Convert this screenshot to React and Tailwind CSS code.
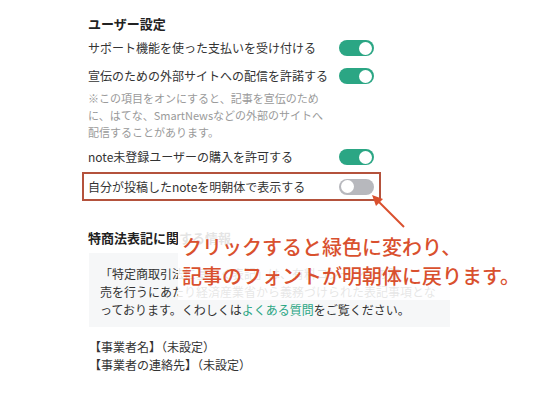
import React from "react";

const Toggle = ({ on }) => {
  return (
    <div
      className={
        "w-[35px] h-[16px] rounded-full flex items-center px-[2px] shrink-0 " +
        (on ? "bg-[#2ba684] justify-end" : "bg-[#b7b8bd] justify-start")
      }
    >
      <div className="w-[13px] h-[13px] rounded-full bg-white"></div>
    </div>
  );
};

const Row = ({ label, on, className = "" }) => {
  return (
    <div className={"flex items-center justify-between h-[20px] " + className}>
      <span className="text-[12px] leading-[20px] text-[#333]">{label}</span>
      <Toggle on={on} />
    </div>
  );
};

const App = () => {
  return (
    <div
      className="relative w-[550px] h-[410px] bg-white overflow-hidden"
      style={{ fontFamily: '"Noto Sans CJK JP", "Noto Sans", sans-serif' }}
    >
      <div className="ml-[88px] w-[286px]">
        <h2 className="mt-[15px] text-[13px] leading-[18px] font-bold text-[#222]">ユーザー設定</h2>
        <Row className="mt-[5px]" label="サポート機能を使った支払いを受け付ける" on />
        <Row className="mt-[8px]" label="宣伝のための外部サイトへの配信を許諾する" on />
        <p className="mt-[4px] text-[11px] leading-[17px] text-[#9a9a9a]">
          ※この項目をオンにすると、記事を宣伝のため
          <br />
          に、はてな、SmartNewsなどの外部のサイトへ
          <br />
          配信することがあります。
        </p>
        <Row className="mt-[6px]" label="note未登録ユーザーの購入を許可する" on />
        <div className="mt-[5px] -ml-[6px] -mr-[7px] border-2 border-[#b4523c] pt-[2px] pb-[2px] pl-[4px] pr-[5px]">
          <Row className="h-[21px]" label="自分が投稿したnoteを明朝体で表示する" on={false} />
        </div>
      </div>

      <div className="ml-[88px]">
        <h2 className="mt-[28px] text-[13px] leading-[18px] font-bold text-[#222]">特商法表記に関する情報</h2>
      </div>
      <div className="ml-[89px] w-[361px] mt-[6px] bg-[#f6f7f8] pt-[12px] pb-[8px] px-[11px] text-[12px] leading-[18px] text-[#333] whitespace-nowrap">
        「特定商取引法に基づく表記」は、有料コンテンツの販
        <br />
        売を行うにあたり経済産業省から義務づけられた表記事項とな
        <br />
        っております。くわしくは<span className="text-[#2ba684]">よくある質問</span>をご覧ください。
      </div>
      <div className="ml-[89px] mt-[11px] text-[12px] leading-[18px] text-[#333]">
        <p>【事業者名】（未設定）</p>
        <p>【事業者の連絡先】（未設定）</p>
      </div>

      {/* annotation */}
      <div className="absolute left-[178px] top-[224px] w-[337px] h-[76px] bg-white/[0.88] pl-[4px] pt-[8px]">
        <p className="text-[20px] leading-[29px] font-medium text-[#d9502e] whitespace-nowrap">
          クリックすると緑色に変わり、
          <br />
          記事のフォントが明朝体に戻ります。
        </p>
      </div>
      <svg className="absolute left-[368px] top-[192px]" width="42" height="40" viewBox="0 0 42 40">
        <line x1="36" y1="35" x2="9" y2="8" stroke="#d9502e" strokeWidth="2" />
        <polygon points="4,3 15,7 8,14" fill="#d9502e" />
      </svg>
    </div>
  );
};

export default App;
